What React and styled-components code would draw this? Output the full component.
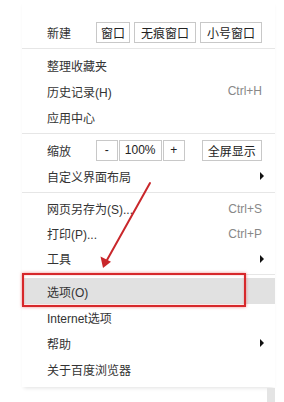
import React from "react";
import styled, { createGlobalStyle } from "styled-components";

const Global = createGlobalStyle`
  html, body {
    margin: 0;
    padding: 0;
    background: #fff;
  }
  body {
    font-family: "Liberation Sans", "Noto Sans CJK SC", sans-serif;
    font-size: 12px;
    color: #333;
  }
`;

const Page = styled.div`
  position: relative;
  width: 284px;
  height: 402px;
  overflow: hidden;
  background: #fff;
`;

const Menu = styled.div`
  margin-left: 22px;
  width: 253px;
  padding: 19px 0 5px;
  background: #fff;
  box-shadow: 0 3px 4px -2px rgba(0, 0, 0, 0.12);
`;

const Row = styled.div`
  display: flex;
  align-items: center;
  height: ${(p) => p.h || 26}px;
  padding: 0 13px 0 25px;
  background: ${(p) => (p.active ? "#e1e1e1" : "transparent")};
`;

const Label = styled.span`
  flex: 1;
  white-space: nowrap;
`;

const ToolLabel = styled.span`
  width: 50px;
  white-space: nowrap;
`;

const Shortcut = styled.span`
  color: #888;
  white-space: nowrap;
`;

const Arrow = styled.span`
  width: 0;
  height: 0;
  margin-right: -2px;
  border-top: 4px solid transparent;
  border-bottom: 4px solid transparent;
  border-left: 4px solid #111;
`;

const Separator = styled.div`
  height: 1px;
  margin: 3px 0;
  background: #e6e6e6;
`;

const BtnGroup = styled.div`
  display: flex;
  gap: ${(p) => p.gap || 0}px;
  margin-right: ${(p) => p.mr || 0}px;
`;

const Btn = styled.span`
  box-sizing: border-box;
  display: flex;
  align-items: center;
  justify-content: center;
  width: ${(p) => p.w}px;
  height: 21px;
  border: 1px solid #c8c8c8;
  background: #fff;
  color: #222;
  white-space: nowrap;
`;

const Highlight = styled.div`
  position: absolute;
  left: 22px;
  top: 273px;
  width: 224px;
  height: 34px;
  box-sizing: border-box;
  border: 2px solid #d7282b;
  box-shadow: 0 0 3px rgba(230, 40, 40, 0.55),
    inset 0 0 2px rgba(230, 40, 40, 0.4);
`;

const Overlay = styled.svg`
  position: absolute;
  left: 0;
  top: 0;
  pointer-events: none;
`;

const BottomStrip = styled.div`
  position: absolute;
  left: 267px;
  top: 388px;
  width: 8px;
  height: 14px;
  background: #e4e4e4;
`;

const history = [
  { label: "整理收藏夹" },
  { label: "历史记录(H)", key: "Ctrl+H" },
  { label: "应用中心" },
];

const pageItems = [
  { label: "网页另存为(S)...", key: "Ctrl+S" },
  { label: "打印(P)...", key: "Ctrl+P" },
  { label: "工具", sub: true },
];

const bottomItems = [
  { label: "Internet选项" },
  { label: "帮助", sub: true },
  { label: "关于百度浏览器" },
];

const Item = ({ label, shortcut, sub, h, active }) => (
  <Row h={h} active={active}>
    <Label>{label}</Label>
    {shortcut && <Shortcut>{shortcut}</Shortcut>}
    {sub && <Arrow />}
  </Row>
);

export default function App() {
  return (
    <Page>
      <Global />
      <Menu>
        <Row>
          <ToolLabel>新建</ToolLabel>
          <BtnGroup gap={4}>
            <Btn w={34}>窗口</Btn>
            <Btn w={62}>无痕窗口</Btn>
            <Btn w={62}>小号窗口</Btn>
          </BtnGroup>
        </Row>
        <Separator />
        {history.map((s) => (
          <Item key={s.label} label={s.label} shortcut={s.key} />
        ))}
        <Separator />
        <Row>
          <ToolLabel>缩放</ToolLabel>
          <BtnGroup gap={1} mr={17}>
            <Btn w={22}>-</Btn>
            <Btn w={43}>100%</Btn>
            <Btn w={22}>+</Btn>
          </BtnGroup>
          <Btn w={62}>全屏显示</Btn>
        </Row>
        <Item label="自定义界面布局" sub />
        <Separator />
        {pageItems.map((s) => (
          <Item key={s.label} h={25} label={s.label} shortcut={s.key} sub={s.sub} />
        ))}
        <Separator />
        <Item label="选项(O)" active />
        {bottomItems.map((s) => (
          <Item key={s.label} label={s.label} sub={s.sub} />
        ))}
      </Menu>
      <BottomStrip />
      <Highlight />
      <Overlay width="284" height="402" viewBox="0 0 284 402">
        <line
          x1="150"
          y1="183"
          x2="107"
          y2="260"
          stroke="#c9272b"
          strokeWidth="2"
          strokeLinecap="round"
        />
        <polygon points="103,268 100.5,256.5 111,261.8" fill="#c9272b" />
      </Overlay>
    </Page>
  );
}
